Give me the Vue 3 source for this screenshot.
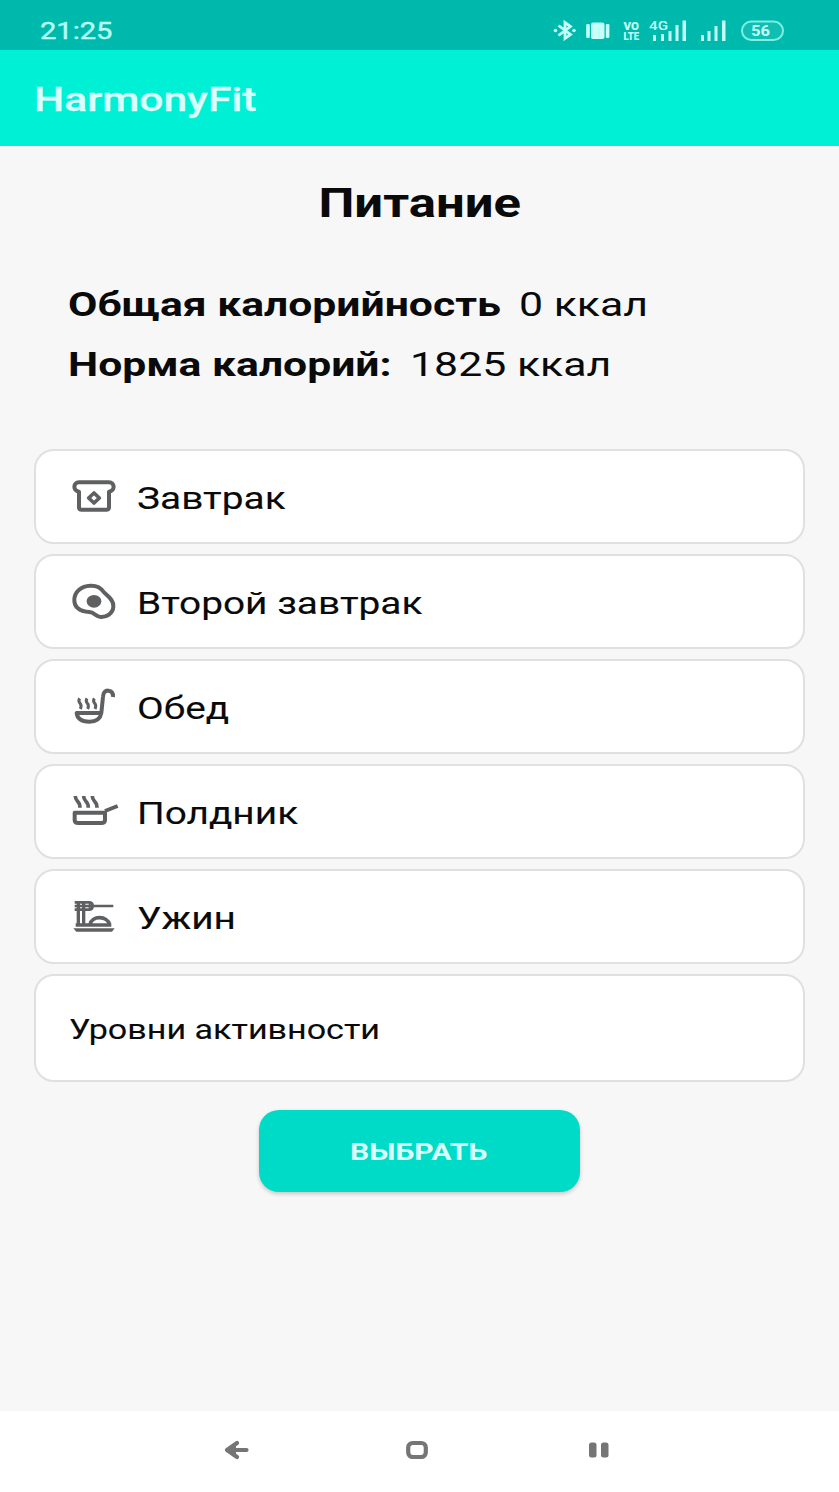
<script setup>
const meals = [
  { id: 'toast', label: 'Завтрак', box: '120 111 150 120' },
  { id: 'egg', label: 'Второй завтрак', box: '120 96 150 120' },
  { id: 'ladle', label: 'Обед', box: '120 96 150 120' },
  { id: 'pan', label: 'Полдник', box: '120 96 150 120' },
  { id: 'noodles', label: 'Ужин', box: '120 96 150 120' },
]
</script>

<template>
  <div class="screen">
    <div class="status">
      <span class="wide clock">21:25</span>
      <svg class="status-icons" viewBox="0 0 260 50" width="260" height="50">
        <g fill="none" stroke="#c4fff8" stroke-width="2.8">
          <path d="M18.5 25.5 L30.5 34.5 L25 38.5 V22.5 L30.5 26.5 L18.5 35.5" />
        </g>
        <g fill="#c4fff8">
          <circle cx="15.5" cy="30.5" r="1.8" />
          <circle cx="34" cy="30.5" r="1.8" />
          <rect x="51" y="22.5" width="13.5" height="16.5" rx="2" />
          <rect x="46.2" y="24" width="3.6" height="14" rx="1.2" />
          <rect x="65.8" y="24" width="3.6" height="14" rx="1.2" />
          <text x="83.5" y="30" class="tiny" textLength="15.5" lengthAdjust="spacingAndGlyphs">VO</text>
          <text x="83.5" y="40" class="tiny" textLength="15.5" lengthAdjust="spacingAndGlyphs">LTE</text>
          <text x="109" y="29.5" class="net" textLength="19" lengthAdjust="spacingAndGlyphs">4G</text>
          <path d="M113 35h3v6h-3z M121 34h3v7h-3z M128.5 31h3v10h-3z M135.5 25h3v16h-3z M142.5 20.5h3.5v20.5h-3.5z" />
          <path d="M161 35h3v6h-3z M167.5 31h3v10h-3z M174.5 26h3v15h-3z M182 20.5h3.5v20.5H182z" />
        </g>
        <rect x="202" y="21.5" width="41" height="18.5" rx="9.25" fill="#10beb2" stroke="#7eeee2" stroke-width="2" />
        <text x="211" y="36" class="battery" textLength="19" lengthAdjust="spacingAndGlyphs">56</text>
      </svg>
    </div>

    <header class="appbar"><span class="wide brand">HarmonyFit</span></header>

    <main class="content">
      <h1 class="title"><span class="wide title-text">Питание</span></h1>

      <dl class="summary">
        <div class="summary-row">
          <dt class="total"><span class="wide bold">Общая калорийность</span></dt>
          <dd><span class="wide">0 ккал</span></dd>
        </div>
        <div class="summary-row">
          <dt class="norm"><span class="wide bold">Норма калорий:</span></dt>
          <dd><span class="wide">1825 ккал</span></dd>
        </div>
      </dl>

      <ul class="meals">
        <li v-for="meal in meals" :key="meal.id" class="card meal">
          <svg class="meal-icon" :viewBox="meal.box" width="50" height="40">
            <g v-if="meal.id === 'toast'">
              <path d="M147 155 C128 152 129 127 147 127 H237 C255 127 256 152 237 155 V202 Q237 209 229 209 H155 Q147 209 147 202 Z" />
              <path d="M192 159 L208 174 L192 189 L176 174 Z" stroke-width="11" />
            </g>
            <g v-else-if="meal.id === 'egg'">
              <path d="M181 107 C201 106 212 112 221 126 C232 138 252 149 250 170 C249 191 229 202 212 201 C198 200 193 187 178 186 C151 184 133 175 133 150 C133 126 153 108 181 107 Z" />
              <ellipse cx="192" cy="154" rx="22" ry="19" class="solid" />
            </g>
            <g v-else-if="meal.id === 'ladle'">
              <path d="M140 174 H214 C211 192 197 200 178 200 C155 200 142 191 140 174 Z M214 174 L219 125 C220 111 226 106 235 107 C246 108 250 114 249 126" />
              <path d="M149 130 q-5 8 1 15 q6 7 1 17 M171 130 q-5 8 1 15 q6 7 1 17 M193 130 q-5 8 1 15 q6 7 1 17" stroke-width="9" />
            </g>
            <g v-else-if="meal.id === 'pan'">
              <path d="M134 158 H225 V181 Q225 189 214 189 H145 Q134 189 134 181 Z M225 153 L263 138" />
              <path d="M136 108 q0 9 6 15 q8 8 8 20 M161 108 q0 9 6 15 q8 8 8 20 M187 108 q0 9 6 15 q8 8 8 20" stroke-width="11" />
            </g>
            <g v-else>
              <path d="M134 112 H177 Q188 112 188 123 Q188 134 177 134 H134 M134 123 H250" stroke-width="8" />
              <path d="M145 110 V180 M161 110 V180" stroke-width="10" />
              <path d="M179 112 V135" stroke-width="6" />
              <path d="M137 180 H244 M180 179 C186 150 232 152 239 179" stroke-width="11" />
              <path d="M130 190 H254 L246 200 H139 Z" class="solid" />
            </g>
          </svg>
          <span class="wide meal-label">{{ meal.label }}</span>
        </li>
        <li class="card activity"><span class="wide activity-label">Уровни активности</span></li>
      </ul>

      <button type="button" class="choose"><span class="wide choose-text">ВЫБРАТЬ</span></button>
    </main>

    <nav class="navbar">
      <svg viewBox="0 0 28 22" width="28" height="22">
        <path d="M24.5 11 H6 M15 4 L5 11 L15 18" fill="none" stroke="#757575" stroke-width="4.2" stroke-linecap="round" stroke-linejoin="round" />
        <path d="M4 11 L14 5 V17 Z" fill="#757575" />
      </svg>
      <svg class="home" viewBox="0 0 24 20" width="24" height="20">
        <rect x="3.2" y="3" width="17.6" height="14" rx="4.5" fill="none" stroke="#757575" stroke-width="4.2" />
      </svg>
      <svg viewBox="0 0 22 18" width="22" height="18">
        <rect x="1" y="1.5" width="7.5" height="15" rx="2.5" fill="#757575" />
        <rect x="13" y="1.5" width="7.5" height="15" rx="2.5" fill="#757575" />
      </svg>
    </nav>
  </div>
</template>

<style>
body {
  background: #f7f7f7;
}
</style>

<style scoped>
.screen {
  display: flex;
  flex-direction: column;
  width: 839px;
  height: 1492px;
  overflow: hidden;
  background: #f7f7f7;
  color: #0a0a0a;
  font-family: Roboto, "Liberation Sans", sans-serif;
}

/* Extended letterforms used throughout the app */
.wide {
  display: inline-block;
  white-space: nowrap;
  transform: scaleX(1.298);
  transform-origin: left center;
}

.status {
  display: flex;
  justify-content: space-between;
  box-sizing: border-box;
  height: 50px;
  padding: 0 39px 0 40px;
  background: #00b9ad;
}
.clock {
  font-size: 23px;
  line-height: 63px;
  color: #b8fff6;
  -webkit-text-stroke: 0.4px;
  transform: scaleX(1.265);
}
.tiny {
  font-size: 10px;
  line-height: 10px;
  font-weight: 900;
}
.net {
  font-size: 12px;
  font-weight: 500;
}
.battery {
  font-size: 15px;
  font-weight: 700;
  fill: #c4fff8;
}

.appbar {
  box-sizing: border-box;
  height: 96px;
  padding-left: 34px;
  background: #00f0d6;
}
.brand {
  font-size: 34px;
  line-height: 99px;
  font-weight: 500;
  color: #d8fffb;
  -webkit-text-stroke: 0.3px;
  transform: scaleX(1.252);
}

.content {
  display: flex;
  flex: 1;
  flex-direction: column;
  align-items: center;
}
.title {
  margin: 33px 0 0;
  font-size: 41px;
  line-height: 48px;
}
.title-text {
  transform: scaleX(1.24);
  transform-origin: center;
}
.summary {
  align-self: stretch;
  margin: 48px 0 0 68px;
  font-size: 33px;
  line-height: 60px;
}
.summary-row {
  display: flex;
}
.summary-row dt,
.summary-row dd {
  margin: 0;
}
.bold {
  font-weight: 700;
  transform: scaleX(1.293);
}
.total {
  width: 451px;
}
.norm {
  width: 342px;
}

.meals {
  display: grid;
  gap: 10px;
  width: 771px;
  margin: 54px 0 0;
  padding: 0;
  list-style: none;
}
.card {
  display: flex;
  align-items: center;
  box-sizing: border-box;
  border: 2px solid #e0e0e0;
  border-radius: 20px;
  background: #fff;
}
.meal {
  height: 95px;
  padding-left: 34px;
}
.meal-icon {
  margin-right: 17px;
  fill: none;
  stroke: #5f6062;
  stroke-width: 12;
  stroke-linejoin: round;
}
.solid {
  fill: #5f6062;
  stroke: none;
}
.meal-label {
  font-size: 31.5px;
  line-height: 40px;
  padding-top: 4px;
  -webkit-text-stroke: 0.1px;
  transform: scaleX(1.232);
}
.activity {
  height: 108px;
  padding-left: 33px;
}
.activity-label {
  padding-top: 3px;
  font-size: 27px;
  -webkit-text-stroke: 0.1px;
  transform: scaleX(1.262);
}

.choose {
  width: 321px;
  height: 82px;
  margin: 28px 1px 0 0;
  padding: 2px 0 0;
  border: 0;
  border-radius: 20px;
  background: #00dbc7;
  box-shadow: 0 2px 4px #0003;
  font: 700 24px Roboto, sans-serif;
  color: #d8fffb;
}
.choose-text {
  transform: scaleX(1.255);
  transform-origin: center;
}

.navbar {
  display: flex;
  align-items: center;
  justify-content: space-between;
  box-sizing: border-box;
  height: 81px;
  padding: 0 229px 4px 222px;
  background: #fff;
}
.home {
  margin-right: 4px;
}
</style>
